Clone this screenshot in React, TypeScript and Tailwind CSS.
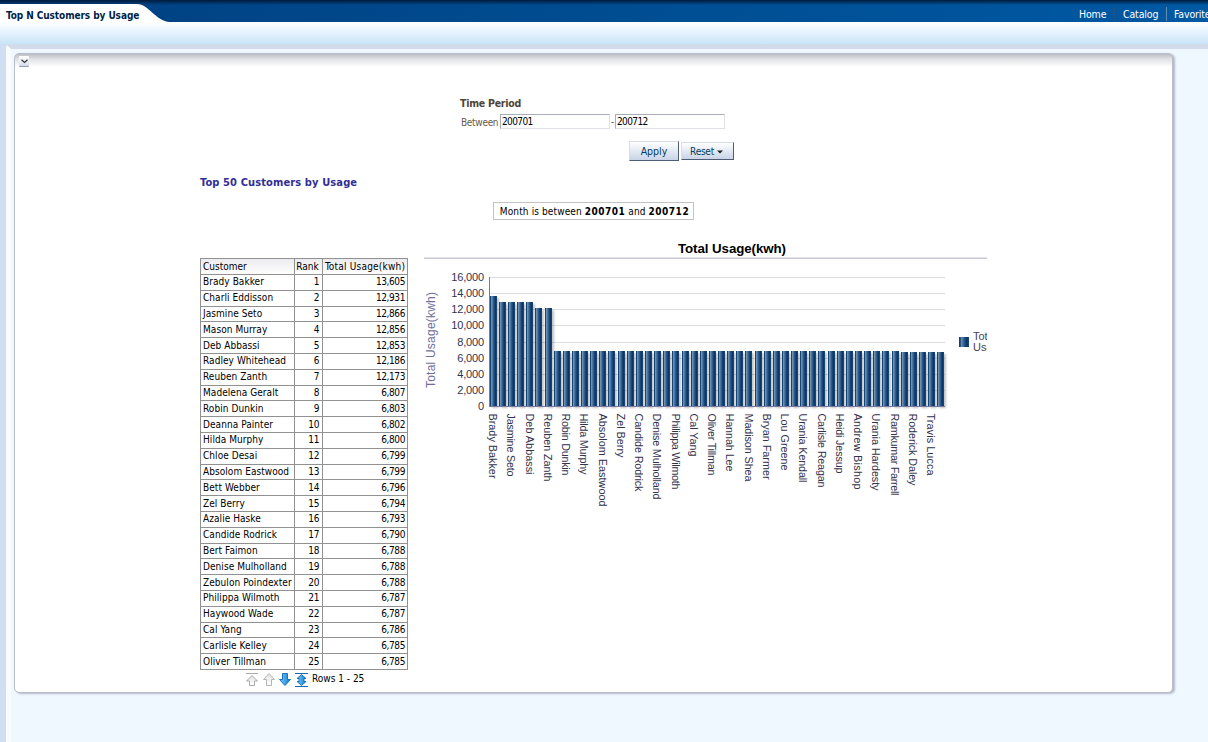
import { useState } from "react";

type Customer = { name: string; usage: number };
type AxisLabel = { name: string; length: number };

const customers: Customer[] = [
  { name: "Brady Bakker", usage: 13605 },
  { name: "Charli Eddisson", usage: 12931 },
  { name: "Jasmine Seto", usage: 12866 },
  { name: "Mason Murray", usage: 12856 },
  { name: "Deb Abbassi", usage: 12853 },
  { name: "Radley Whitehead", usage: 12186 },
  { name: "Reuben Zanth", usage: 12173 },
  { name: "Madelena Geralt", usage: 6807 },
  { name: "Robin Dunkin", usage: 6803 },
  { name: "Deanna Painter", usage: 6802 },
  { name: "Hilda Murphy", usage: 6800 },
  { name: "Chloe Desai", usage: 6799 },
  { name: "Absolom Eastwood", usage: 6799 },
  { name: "Bett Webber", usage: 6796 },
  { name: "Zel Berry", usage: 6794 },
  { name: "Azalie Haske", usage: 6793 },
  { name: "Candide Rodrick", usage: 6790 },
  { name: "Bert Faimon", usage: 6788 },
  { name: "Denise Mulholland", usage: 6788 },
  { name: "Zebulon Poindexter", usage: 6788 },
  { name: "Philippa Wilmoth", usage: 6787 },
  { name: "Haywood Wade", usage: 6787 },
  { name: "Cal Yang", usage: 6786 },
  { name: "Carlisle Kelley", usage: 6785 },
  { name: "Oliver Tillman", usage: 6785 },
];

// every second customer gets a label on the axis
const axisLabels: AxisLabel[] = [
  { name: "Brady Bakker", length: 65 },
  { name: "Jasmine Seto", length: 63 },
  { name: "Deb Abbassi", length: 61 },
  { name: "Reuben Zanth", length: 68 },
  { name: "Robin Dunkin", length: 62 },
  { name: "Hilda Murphy", length: 61 },
  { name: "Absolom Eastwood", length: 93 },
  { name: "Zel Berry", length: 44 },
  { name: "Candide Rodrick", length: 78 },
  { name: "Denise Mulholland", length: 86 },
  { name: "Philippa Wilmoth", length: 76 },
  { name: "Cal Yang", length: 43 },
  { name: "Oliver Tillman", length: 62 },
  { name: "Hannah Lee", length: 58 },
  { name: "Madison Shea", length: 68 },
  { name: "Bryan Farmer", length: 66 },
  { name: "Lou Greene", length: 57 },
  { name: "Urania Kendall", length: 69 },
  { name: "Carlisle Reagan", length: 74 },
  { name: "Heidi Jessup", length: 60 },
  { name: "Andrew Bishop", length: 76 },
  { name: "Urania Hardesty", length: 77 },
  { name: "Ramkumar Farrell", length: 82 },
  { name: "Roderick Daley", length: 72 },
  { name: "Travis Lucca", length: 62 },
];

const ticks = [0, 2000, 4000, 6000, 8000, 10000, 12000, 14000, 16000];

const usages = Array.from({ length: 50 }, (_, i) =>
  i < customers.length ? customers[i].usage : i < 45 ? 6785 : 6700
);

const yFor = (v: number) => Math.round(171 - (v * 129) / 16000);
const barX = (i: number) => Math.floor(66.3 + i * 9.13);

function UsageChart() {
  return (
    <svg width="563" height="275" viewBox="0 0 563 275" className="block font-['Liberation_Sans']">
      <defs>
        <linearGradient id="bar">
          <stop offset="0" stopColor="#0f3f72" />
          <stop offset="0.14" stopColor="#174a7c" />
          <stop offset="0.2" stopColor="#7292b4" />
          <stop offset="0.38" stopColor="#49719a" />
          <stop offset="0.6" stopColor="#1d4a7a" />
          <stop offset="0.8" stopColor="#063769" />
          <stop offset="1" stopColor="#1d4c7e" />
        </linearGradient>
        <filter id="soft" x="-5%" y="-5%" width="110%" height="110%">
          <feGaussianBlur stdDeviation="0.8" />
        </filter>
      </defs>

      <text x="254" y="18" fontSize="13.3" fontWeight="bold" textLength="108" fill="#000">Total Usage(kwh)</text>
      <rect x="0" y="22" width="563" height="1" fill="#e1e1e8" />
      <rect x="0" y="23" width="563" height="1" fill="#cbcbd9" />

      {ticks.map(t => (
        <g key={t}>
          {t > 0 && <rect x="66" y={yFor(t)} width="455" height="1" fill="#dcdce6" />}
          <text x="60" y={yFor(t) + 3.5} fontSize="11" textAnchor="end" letterSpacing="-0.15" fill="#33334c">{t.toLocaleString("en-US")}</text>
        </g>
      ))}

      <g filter="url(#soft)" fill="#000" opacity="0.24">
        {usages.map((u, i) => (
          <rect key={i} x={barX(i) + 2} y={yFor(u) + 2} width="7" height={171 - yFor(u)} />
        ))}
      </g>
      {usages.map((u, i) => (
        <rect key={i} x={barX(i)} y={yFor(u)} width="7" height={171 - yFor(u)} fill="url(#bar)" />
      ))}
      <rect x="65" y="42" width="1" height="130" fill="#7878a0" />
      <rect x="65" y="171" width="456" height="1" fill="#7878a0" />

      <text transform="translate(11 153) rotate(-90)" fontSize="12" textLength="96" fill="#6f6f9c">Total Usage(kwh)</text>

      {axisLabels.map((l, i) => (
        <text key={l.name} transform={`translate(${Math.round(65 + i * 18.25)} 178.5) rotate(90)`} fontSize="10.8" textLength={l.length} fill="#33334c">
          {l.name}
        </text>
      ))}

      <rect x="535" y="102" width="10" height="10" fill="url(#bar)" />
      <text x="549" y="105" fontSize="11" fill="#43435a">Total</text>
      <text x="549" y="116" fontSize="11" fill="#43435a">Usage</text>
    </svg>
  );
}

function Pager() {
  return (
    <div className="flex h-[17px] items-center pl-[45px] text-[10px]">
      <svg width="66" height="17" viewBox="0 0 66 17" className="mt-[3px]">
        <defs>
          <linearGradient id="grey" x2="0" y2="1">
            <stop offset="0" stopColor="#e2e2e2" />
            <stop offset="1" stopColor="#fff" />
          </linearGradient>
          <linearGradient id="blue" x2="1" y2="0">
            <stop offset="0" stopColor="#7fd0fb" />
            <stop offset="1" stopColor="#087bd0" />
          </linearGradient>
        </defs>
        <path d="M1 1.5h12" stroke="#aaa" />
        <path d="M7 3.5 12.5 9H9.5v4.5h-5V9h-3z" fill="url(#grey)" stroke="#aaa" />
        <path d="M24 1.5 29.5 7.5h-3v6h-5v-6h-3z" fill="url(#grey)" stroke="#b4b4b4" />
        <path d="M37.5 1.5h5v6h3L40 13.5 34.5 7.5h3z" fill="url(#blue)" stroke="#1c72bb" />
        <path d="M50 1.5h13M50 14.5h13" stroke="#1769b5" />
        <path d="M56.5 2.5 61 6.5h-2v3h2L56.5 13.5 52 9.5h2v-3h-2z" fill="url(#blue)" stroke="#1c72bb" />
      </svg>
      <span className="ml-[1px]">Rows 1 - 25</span>
    </div>
  );
}

function CustomerTable() {
  return (
    <div className="w-[208px]">
      <table className="h-[412px] w-[208px] table-fixed border-collapse text-[10px] leading-[12px]">
        <colgroup>
          <col className="w-[94px]" />
          <col className="w-[28px]" />
          <col className="w-[85px]" />
        </colgroup>
        <thead>
          <tr className="h-[16px] bg-linear-to-b from-[#ececf0] to-white">
            <th className="border border-[#919191] p-0 pl-[2px] text-left font-normal">Customer</th>
            <th className="border border-[#919191] p-0 pr-[2px] text-center font-normal">Rank</th>
            <th className="border border-[#919191] p-0 text-center font-normal tracking-[0.2px] whitespace-nowrap">Total Usage(kwh)</th>
          </tr>
        </thead>
        <tbody>
          {customers.map((c, i) => (
            <tr key={c.name}>
              <td className="border border-[#919191] p-0 pl-[2px] tracking-[0.06px] whitespace-nowrap">{c.name}</td>
              <td className="border border-[#919191] p-0 pr-[3px] text-right tracking-[-0.4px]">{i + 1}</td>
              <td className="border border-[#919191] p-0 pr-[2px] text-right tracking-[-0.4px]">{c.usage.toLocaleString("en-US")}</td>
            </tr>
          ))}
        </tbody>
      </table>
      <Pager />
    </div>
  );
}

function Filters() {
  const [from, setFrom] = useState("200701");
  const [to, setTo] = useState("200712");
  const input = "h-[15px] w-[110px] border border-[#dfe1e7] border-t-[#a9adb9] border-l-[#a9adb9] bg-white px-[1px] text-[10px] tracking-[-0.6px] text-black outline-none";

  return (
    <div className="ml-[445px] w-[274px]">
      <h3 className="h-[16px] text-[10.5px] leading-[12px] font-bold tracking-[-0.25px] text-[#4f4437]">Time Period</h3>
      <div className="flex h-[16px] items-center text-[10px] text-[#6b5a43]">
        <span className="w-[40px] pt-[2px] pl-[1px] tracking-[-0.3px]">Between</span>
        <input className={input} value={from} onChange={e => setFrom(e.target.value)} />
        <span className="w-[5px] text-center">-</span>
        <input className={input} value={to} onChange={e => setTo(e.target.value)} />
      </div>
      <div className="mt-[12px] flex h-[20px] items-center justify-end gap-[2px] text-[#003d5b]">
        <button className="h-[20px] w-[50px] border border-[#d7dce5] border-r-[#4d5d76] border-b-[#4d5d76] bg-linear-to-b from-white to-[#c9d4e7] pt-[2px] text-[10.5px]">Apply</button>
        <button className="flex h-[18px] w-[53px] items-center justify-center gap-[3px] border border-[#d7dce5] border-r-[#4d5d76] border-b-[#4d5d76] bg-linear-to-b from-white to-[#c9d4e7] pr-[2px] text-[10px] tracking-[-0.25px]">
          Reset
          <svg width="6" height="4" viewBox="0 0 6 4" className="mt-[2px]"><path d="M0 0.5h6L3 3.5z" fill="#222" /></svg>
        </button>
      </div>
    </div>
  );
}

function Header() {
  return (
    <header className="relative h-[44px] bg-linear-to-b from-white from-50% to-[#c8e4f8]">
      <div className="flex h-[22px] justify-end bg-linear-to-r from-[#004080] to-[#0059a3]">
        <div className="absolute inset-x-0 top-0 h-[5px] bg-linear-to-b from-[#001b3b] to-transparent" />
        <svg width="176" height="22" viewBox="0 0 176 22" className="absolute top-0 left-0">
          <path d="M0 4H137C149 4 155 21 170 22H0z" fill="#fff" />
        </svg>
        <h1 className="absolute top-[9px] left-[6px] text-[10px] leading-[14px] font-bold tracking-[-0.08px] whitespace-nowrap text-[#001f47]">Top N Customers by Usage</h1>
        <nav className="flex w-[142px] items-center overflow-hidden pt-[5px] text-[10.5px] leading-[14px] tracking-[-0.15px] whitespace-nowrap text-white">
          <a className="w-[49px] shrink-0 border-r border-[#24517f] pl-[13px]">Home</a>
          <a className="w-[52px] shrink-0 border-r border-[#658caf] pl-[8px]">Catalog</a>
          <a className="shrink-0 pl-[7px]">Favorites</a>
        </nav>
      </div>
    </header>
  );
}

export default function App() {
  return (
    <div className="h-[742px] w-[1208px] overflow-hidden bg-[#cfdff1] font-['DejaVu_Sans_Condensed','DejaVu_Sans',sans-serif] text-black">
      <Header />
      <main className="ml-[6px] h-[698px] rounded-tl-[4px] border-t-[5px] border-l-[5px] border-t-[#d3dbeb] border-l-[#f8fbff] bg-[#eff7ff] pt-[4px] pl-[3px]">
        <section className="h-[640px] w-[1159px] rounded-[5px] border border-[#b9bcc9] bg-white bg-[linear-gradient(#bbbec6,#e0e1e4_5px,#fff_13px)] shadow-[2px_1px_2px_#b4bac8]">
          <div className="h-[43px] pt-[2px] pl-[4px]">
            <button className="flex h-[11px] w-[10px] items-center justify-center rounded-[1px] border-b border-[#8e9bb4] bg-linear-to-b from-white to-[#d5dcea]">
              <svg width="7" height="5" viewBox="0 0 7 5"><path d="M0.5 0.7 3.5 3.5 6.5 0.7" fill="none" stroke="#333" strokeWidth="1.2" /></svg>
            </button>
          </div>
          <Filters />
          <div className="ml-[185px] w-[787px]">
            <h2 className="mt-[14px] h-[27px] text-[11px] leading-[15px] font-bold tracking-[0.12px] text-[#312e96]">Top 50 Customers by Usage</h2>
            <div className="ml-[293px] flex h-[18px] w-[201px] items-center justify-center border border-[#c3c3c3] pl-[2px] text-[10px] tracking-[0.12px] whitespace-pre">
              Month is between <b className="tracking-[0.5px]">200701</b> and <b className="tracking-[0.5px]">200712</b>
            </div>
            <div className="mt-[15px] flex justify-between">
              <div className="pt-[23px]">
                <CustomerTable />
              </div>
              <UsageChart />
            </div>
          </div>
        </section>
      </main>
    </div>
  );
}
